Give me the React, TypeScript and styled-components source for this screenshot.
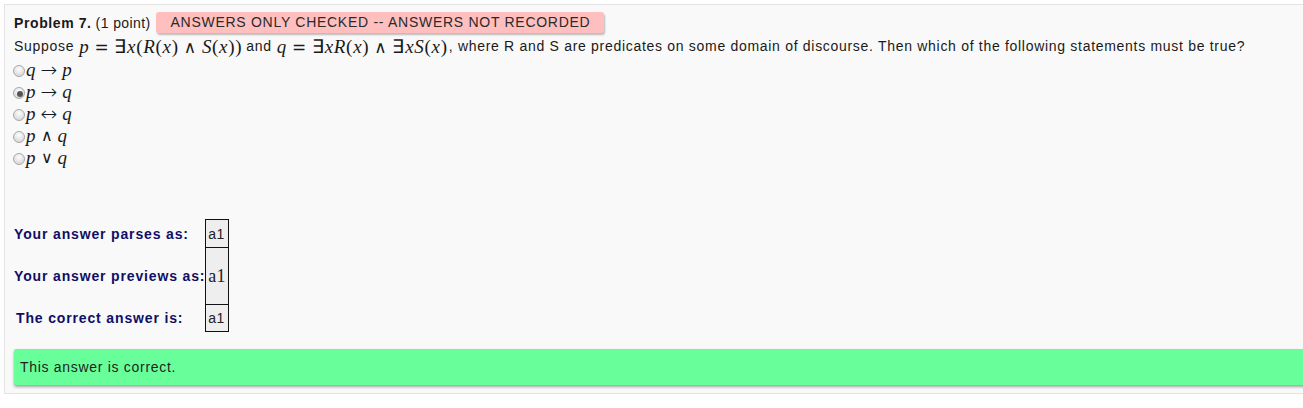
import React from "react";
import styled, { createGlobalStyle } from "styled-components";

const Global = createGlobalStyle`
  html, body { margin: 0; padding: 0; background: #ffffff; overflow: hidden; }
  body { font-family: "Liberation Sans", Arial, sans-serif; font-size: 14px; color: #1a1a1a; letter-spacing: 0.7px; }
`;

const Panel = styled.div`
  margin: 4px 0 0 4px;
  width: 1340px;
  box-sizing: border-box;
  background: #f9f9f9;
  border: 1px solid #e3e3e3;
  border-right: none;
  padding: 7px 0 8px 9px;
  display: flex;
  flex-direction: column;
`;

const HeaderRow = styled.div`
  display: flex;
  align-items: center;
  height: 21px;
  white-space: nowrap;
`;

const Bold = styled.b`
  font-weight: bold;
  letter-spacing: 0.6px;
  margin-right: 4px;
`;

const Points = styled.span`
  letter-spacing: 0.4px;
`;

const Badge = styled.span`
  margin-left: 5px;
  height: 21px;
  line-height: 21px;
  padding: 0 14px 0 15px;
  background: #ffbfbf;
  color: #2a2a2a;
  letter-spacing: 0.72px;
  border-radius: 3px;
  box-shadow: 1px 2px 2px rgba(0, 0, 0, 0.25);
`;

const Statement = styled.div`
  height: 22px;
  margin-top: 2px;
  display: flex;
  align-items: center;
  white-space: nowrap;
`;

const Math = styled.span<{ $tight?: boolean }>`
  font-family: "Liberation Serif", "Times New Roman", serif;
  font-size: 19px;
  letter-spacing: 0.7px;
  margin: 0 ${(p) => (p.$tight ? "1px" : "4px")} 0 5px;
  display: inline-flex;
  align-items: baseline;
`;

const I = styled.span`
  font-style: italic;
`;

const U = styled.span`
  font-style: normal;
`;

const O = styled.span`
  font-family: "DejaVu Sans", sans-serif;
  font-size: 17px;
  margin: 0 5px;
`;

const Choices = styled.div`
  display: flex;
  flex-direction: column;
  margin-top: 2px;
`;

const Choice = styled.label`
  height: 22px;
  display: flex;
  align-items: center;
`;

const Radio = styled.input.attrs({ type: "radio" })`
  appearance: none;
  margin: 2px 1px 0 -1px;
  width: 12px;
  height: 12px;
  border-radius: 50%;
  border: 1px solid #a8a8a8;
  background: radial-gradient(circle at 50% 30%, #fdfdfd 0%, #e2e2e2 60%, #cfcfcf 100%);
  position: relative;
  &:checked::after {
    content: "";
    position: absolute;
    left: 3px;
    top: 3px;
    width: 6px;
    height: 6px;
    border-radius: 50%;
    background: #555;
  }
`;

const ChoiceMath = styled.span`
  font-family: "Liberation Serif", "Times New Roman", serif;
  font-style: italic;
  font-size: 19px;
  display: flex;
  align-items: center;
  gap: 5px;
  letter-spacing: 0;
`;

const ChoiceOp = styled.span<{ $small?: boolean }>`
  font-family: "DejaVu Sans", sans-serif;
  font-style: normal;
  font-weight: 300;
  font-size: ${(p) => (p.$small ? "16px" : "20px")};
  line-height: 20px;
`;

const Results = styled.table`
  align-self: flex-start;
  margin-top: 50px;
  border-collapse: collapse;
`;

const Label = styled.td<{ $indent?: boolean }>`
  color: #0f0f66;
  font-weight: bold;
  font-size: 14px;
  letter-spacing: 0.85px;
  padding: 0 0 0 ${(p) => (p.$indent ? "2px" : "0")};
  white-space: nowrap;
`;

const Cell = styled.td<{ $h: number; $math?: boolean }>`
  height: ${(p) => p.$h}px;
  box-sizing: border-box;
  border: 1px solid #111;
  background: #eeeeee;
  padding: 0 2px;
  letter-spacing: 0.3px;
  font-family: ${(p) => (p.$math ? '"Liberation Serif", "Times New Roman", serif' : '"Liberation Sans", Arial, sans-serif')};
  font-size: ${(p) => (p.$math ? "18px" : "14px")};
  color: #222;
`;

const Message = styled.div`
  margin-top: 17px;
  height: 36px;
  background: #68ff9a;
  display: flex;
  align-items: center;
  padding-left: 6px;
  color: #1e1e1e;
  box-shadow: 0 2px 3px rgba(0, 0, 0, 0.35);
  border-radius: 2px 0 0 2px;
`;

const choices: { a: string; op: string; b: string; checked?: boolean }[] = [
  { a: "q", op: "→", b: "p" },
  { a: "p", op: "→", b: "q", checked: true },
  { a: "p", op: "↔", b: "q" },
  { a: "p", op: "∧", b: "q" },
  { a: "p", op: "∨", b: "q" },
];

export default function App() {
  return (
    <>
      <Global />
      <Panel>
        <HeaderRow>
          <Bold>Problem 7.</Bold>
          <Points>(1 point)</Points>
          <Badge>ANSWERS ONLY CHECKED -- ANSWERS NOT RECORDED</Badge>
        </HeaderRow>
        <Statement>
          Suppose
          <Math>
            <I>p</I>
            <O>=</O>
            <U>∃</U>
            <I>x</I>
            <U>(</U>
            <I>R</I>
            <U>(</U>
            <I>x</I>
            <U>)</U>
            <O>∧</O>
            <I>S</I>
            <U>(</U>
            <I>x</I>
            <U>))</U>
          </Math>
          and
          <Math $tight>
            <I>q</I>
            <O>=</O>
            <U>∃</U>
            <I>xR</I>
            <U>(</U>
            <I>x</I>
            <U>)</U>
            <O>∧</O>
            <U>∃</U>
            <I>xS</I>
            <U>(</U>
            <I>x</I>
            <U>)</U>
          </Math>
          , where R and S are predicates on some domain of discourse. Then which of the following statements must be true?
        </Statement>
        <Choices>
          {choices.map((c, i) => (
            <Choice key={i}>
              <Radio name="ans" defaultChecked={!!c.checked} />
              <ChoiceMath>
                <span>{c.a}</span>
                <ChoiceOp $small={c.op === "∧" || c.op === "∨"}>{c.op}</ChoiceOp>
                <span>{c.b}</span>
              </ChoiceMath>
            </Choice>
          ))}
        </Choices>
        <Results>
          <tbody>
            <tr>
              <Label>Your answer parses as:</Label>
              <Cell $h={28}>a1</Cell>
            </tr>
            <tr>
              <Label>Your answer previews as:</Label>
              <Cell $h={57} $math>a1</Cell>
            </tr>
            <tr>
              <Label $indent>The correct answer is:</Label>
              <Cell $h={27}>a1</Cell>
            </tr>
          </tbody>
        </Results>
        <Message>This answer is correct.</Message>
      </Panel>
    </>
  );
}
